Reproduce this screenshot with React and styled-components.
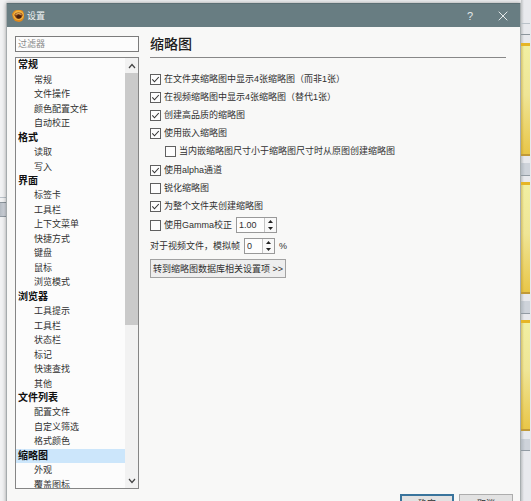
import React, { useState } from "react";
import styled, { createGlobalStyle } from "styled-components";

const GlobalStyle = createGlobalStyle`
  * { box-sizing: border-box; }
  body {
    margin: 0;
    overflow: hidden;
    background: #eff0f2;
    color: #303030;
    font: 9px/14px "Liberation Sans", "Noto Sans CJK SC", sans-serif;
  }
  button, input { font: inherit; color: inherit; margin: 0; }
`;

const Desktop = styled.div`
  display: grid;
  grid-template-columns: 6px 1fr 10px;
  height: 100vh;
  overflow: hidden;
`;

const Strip = styled.div`
  display: flex;
  flex-direction: column;
  background: ${(p) => (p.$right ? "linear-gradient(90deg, #bfc2c4, #e8e9ed 3px)" : "#f1f2f3")};
  padding-right: ${(p) => (p.$right ? "1px" : "0")};
`;

const Gap = styled.div`
  height: ${(p) => p.$h}px;
  flex: none;
`;

const Caption = styled.div`
  flex: none;
  height: ${(p) => p.$h}px;
  background: linear-gradient(90deg, #b3bac1, #ced3da 4px);
  border-bottom: 1px solid #929ba3;
`;

const Edge = styled.div`
  flex: none;
  height: ${(p) => p.$h}px;
  border-top: 1px solid #bac2c9;
  border-bottom: 1px solid #8c959c;
`;

const Folder = styled.div`
  flex: none;
  height: ${(p) => p.$h}px;
  border-top: 3px solid #e6b526;
  border-bottom: 2px solid #c19a39;
  background: linear-gradient(90deg, rgba(160, 120, 20, 0.35), transparent 3px),
    linear-gradient(#f1efa2, #efe596 45%, #e9c648);
`;

const Dialog = styled.main`
  display: flex;
  flex-direction: column;
  margin-top: 3px;
  min-height: 520px;
  background: #f8f8f7;
  border-left: 1px solid #a5abad;
  border-right: 1px solid #a7adaf;
  box-shadow: 0 0 4px rgba(0, 0, 0, 0.35);
`;

const TitleBar = styled.header`
  display: flex;
  align-items: center;
  height: 24px;
  flex: none;
  padding: 0 11px 0 5px;
  gap: 2px;
  background: #687d82;
  color: #f2f5f5;
  border-top: 1px solid #5c6f74;
`;

const TitleText = styled.h1`
  flex: 1;
  margin: 0;
  font-size: 9px;
  font-weight: 400;
`;

const TitleButton = styled.button`
  display: flex;
  align-items: center;
  justify-content: center;
  width: 12px;
  height: 20px;
  margin-left: 19px;
  padding: 0;
  border: 0;
  background: none;
  color: #e4e9ea;
  font-size: 11px;
`;

const Content = styled.div`
  display: grid;
  grid-template-columns: 124px 1fr;
  column-gap: 11px;
  padding: 9px 14px 0 8px;
`;

const Sidebar = styled.aside`
  display: flex;
  flex-direction: column;
  gap: 5px;
`;

const FilterInput = styled.input`
  width: 100%;
  height: 16px;
  padding: 0 2px;
  border: 1px solid #7c7c7c;
  background: #fcfcfc;
  outline: none;
  &::placeholder { color: #8b8b8b; opacity: 1; }
`;

const TreeFrame = styled.div`
  display: flex;
  height: 432px;
  border: 1px solid #858585;
  background: #fcfcfc;
  overflow: hidden;
`;

const Tree = styled.ul`
  display: flex;
  flex-direction: column;
  flex: 1;
  height: 434px;
  margin: 0;
  padding: 0;
  list-style: none;
`;

const TreeItem = styled.li`
  display: flex;
  align-items: center;
  flex: 1 1 0;
  min-height: 0;
  padding-left: ${(p) => (p.$group ? 2 : 18)}px;
  font-size: ${(p) => (p.$group ? 10 : 9)}px;
  font-weight: ${(p) => (p.$group ? 700 : 400)};
  color: ${(p) => (p.$group ? "#101010" : "#303030")};
  background: ${(p) => (p.$selected ? "#cce6fb" : "transparent")};
`;

const Scrollbar = styled.div`
  display: flex;
  flex-direction: column;
  width: 13px;
  background: #f2f2f2;
`;

const ScrollButton = styled.button`
  display: flex;
  align-items: center;
  justify-content: center;
  flex: none;
  height: 15px;
  padding: 0;
  border: 0;
  background: #f2f2f2;
`;

const Track = styled.div`
  flex: 1;
`;

const Thumb = styled.div`
  height: 63%;
  background: #cacaca;
`;

const Panel = styled.section`
  display: flex;
  flex-direction: column;
  align-items: stretch;
`;

const PanelTitle = styled.h2`
  margin: 0 0 12px;
  padding-bottom: 4px;
  border-bottom: 1px solid #888;
  font-size: 14px;
  line-height: 17px;
  font-weight: 500;
  color: #202020;
`;

const OptionRow = styled.div`
  display: flex;
  align-items: center;
  gap: 4px;
  height: ${(p) => (p.$field ? 20 : 18)}px;
  padding-left: ${(p) => (p.$nested ? 15 : 0)}px;
  margin-bottom: ${(p) => (p.$nested || p.$field ? 1 : 0)}px;
`;

const OptionLabel = styled.label`
  display: flex;
  align-items: center;
  gap: 3px;
  white-space: nowrap;
`;

const BoxWrap = styled.span`
  display: grid;
  width: 11px;
  height: 11px;
  > * { grid-area: 1 / 1; }
  svg { pointer-events: none; }
`;

const Box = styled.input`
  appearance: none;
  width: 11px;
  height: 11px;
  border: 1px solid #606060;
  background: #fdfdfd;
`;

const SpinFrame = styled.span`
  display: flex;
  width: ${(p) => (p.$wide ? 41 : 31)}px;
  height: 16px;
  border: 1px solid #999;
  background: #fdfdfd;
`;

const SpinInput = styled.input`
  flex: 1;
  min-width: 0;
  padding: 0 2px;
  border: 0;
  background: none;
  outline: none;
`;

const SpinButtons = styled.span`
  display: flex;
  flex-direction: column;
  width: 12px;
  border-left: 1px solid #c4c4c4;
`;

const SpinButton = styled.button`
  display: flex;
  align-items: center;
  justify-content: center;
  flex: 1;
  padding: 0;
  border: 0;
  background: #f8f8f8;
`;

const LinkButton = styled.button`
  align-self: flex-start;
  height: 19px;
  margin-top: 2px;
  padding: 0 2px;
  border: 1px solid #a2a2a2;
  background: #eeeeee;
  white-space: pre;
`;

const Footer = styled.footer`
  display: flex;
  justify-content: flex-end;
  gap: 5px;
  padding: 5px 7px 7px;
`;

const DialogButton = styled.button`
  width: 54px;
  height: 20px;
  padding: 0;
  border: ${(p) => (p.$primary ? "2px solid #39749c" : "1px solid #adadad")};
  background: #e2e2e2;
  line-height: 14px;
`;

const AppIcon = () => (
  <svg width="13" height="13" viewBox="0 0 13 13" aria-hidden="true">
    <path d="M2 2 4 1 6 1 9 1 11 2 12 5 12 9 10 12 7 13 3 12 1 9 0 5Z" fill="#e08a1c" />
    <ellipse cx="6.5" cy="6.3" rx="5.2" ry="4.8" fill="#f2b541" />
    <path d="M2.2 6Q3.5 3.4 6.5 3.6 9.6 3.4 10.8 6L9.6 8.6Q7 11 4 9Z" fill="#8a4316" />
    <path d="M3.6 5.4Q6.5 3.6 9.4 5.4" stroke="#f7d27c" strokeWidth=".9" fill="none" />
    <ellipse cx="6.9" cy="7.8" rx="2.5" ry="1.7" fill="#43200f" />
  </svg>
);

const CloseIcon = () => (
  <svg width="10" height="10" viewBox="0 0 10 10" aria-hidden="true">
    <path d="M.7.7 9.3 9.3M9.3.7.7 9.3" stroke="currentColor" />
  </svg>
);

const Chevron = ({ down }) => (
  <svg width="8" height="6" viewBox="0 0 8 6" aria-hidden="true">
    <path d={down ? "M1 1 4 4.5 7 1" : "M1 5 4 1.5 7 5"} stroke="#444" strokeWidth="1.2" fill="none" />
  </svg>
);

const Arrow = ({ down }) => (
  <svg width="5" height="3" viewBox="0 0 5 3" aria-hidden="true">
    <path d={down ? "M0 0H5L2.5 3Z" : "M0 3H5L2.5 0Z"} fill="#222" />
  </svg>
);

const sections = [
  ["常规", ["常规", "文件操作", "颜色配置文件", "自动校正"]],
  ["格式", ["读取", "写入"]],
  ["界面", ["标签卡", "工具栏", "上下文菜单", "快捷方式", "键盘", "鼠标", "浏览模式"]],
  ["浏览器", ["工具提示", "工具栏", "状态栏", "标记", "快速查找", "其他"]],
  ["文件列表", ["配置文件", "自定义筛选", "格式颜色"]],
  ["缩略图", ["外观", "覆盖图标"]],
];

const options = [
  { text: "在文件夹缩略图中显示4张缩略图（而非1张）", on: true },
  { text: "在视频缩略图中显示4张缩略图（替代1张）", on: true },
  { text: "创建高品质的缩略图", on: true },
  { text: "使用嵌入缩略图", on: true },
  { text: "当内嵌缩略图尺寸小于缩略图尺寸时从原图创建缩略图", on: false, nested: true },
  { text: "使用alpha通道", on: true },
  { text: "锐化缩略图", on: false },
  { text: "为整个文件夹创建缩略图", on: true },
];

function Checkbox({ text, initial }) {
  const [checked, setChecked] = useState(initial);
  return (
    <OptionLabel>
      <BoxWrap>
        <Box type="checkbox" checked={checked} onChange={(e) => setChecked(e.target.checked)} />
        {checked && (
          <svg width="11" height="11" viewBox="0 0 11 11" aria-hidden="true">
            <path d="M2.3 5.4 4.5 7.8 8.8 3" stroke="#333" strokeWidth="1.1" fill="none" />
          </svg>
        )}
      </BoxWrap>
      {text}
    </OptionLabel>
  );
}

function Spinner({ id, label, initial, step, digits, wide }) {
  const [value, setValue] = useState(initial);
  const change = (d) => setValue((v) => Math.max(0, Number(v) + d).toFixed(digits));
  return (
    <SpinFrame $wide={wide}>
      <SpinInput id={id} aria-label={label} value={value} onChange={(e) => setValue(e.target.value)} />
      <SpinButtons>
        <SpinButton type="button" aria-label="增加" onClick={() => change(step)}><Arrow /></SpinButton>
        <SpinButton type="button" aria-label="减少" onClick={() => change(-step)}><Arrow down /></SpinButton>
      </SpinButtons>
    </SpinFrame>
  );
}

export default function App() {
  return (
    <>
      <GlobalStyle />
      <Desktop>
        <Strip>
          <Gap $h={197} />
          <Edge $h={6} />
          <Caption $h={14} />
        </Strip>
        <Dialog>
          <TitleBar>
            <AppIcon />
            <TitleText>设置</TitleText>
            <TitleButton aria-label="帮助">?</TitleButton>
            <TitleButton aria-label="关闭"><CloseIcon /></TitleButton>
          </TitleBar>
          <Content>
            <Sidebar>
              <FilterInput placeholder="过滤器" aria-label="过滤器" />
              <TreeFrame>
                <Tree>
                  {sections.flatMap(([name, items]) => [
                    <TreeItem key={name + "-group"} $group $selected={name === "缩略图"}>{name}</TreeItem>,
                    ...items.map((item) => <TreeItem key={name + item}>{item}</TreeItem>),
                  ])}
                </Tree>
                <Scrollbar>
                  <ScrollButton aria-label="向上滚动"><Chevron /></ScrollButton>
                  <Track><Thumb /></Track>
                  <ScrollButton aria-label="向下滚动"><Chevron down /></ScrollButton>
                </Scrollbar>
              </TreeFrame>
            </Sidebar>
            <Panel>
              <PanelTitle>缩略图</PanelTitle>
              {options.map((o) => (
                <OptionRow key={o.text} $nested={o.nested}>
                  <Checkbox text={o.text} initial={o.on} />
                </OptionRow>
              ))}
              <OptionRow $field>
                <Checkbox text="使用Gamma校正" initial={false} />
                <Spinner label="Gamma" initial="1.00" step={0.1} digits={2} wide />
              </OptionRow>
              <OptionRow $field>
                <OptionLabel htmlFor="frame">对于视频文件，模拟帧</OptionLabel>
                <Spinner id="frame" initial="0" step={1} digits={0} />
                <span>%</span>
              </OptionRow>
              <LinkButton type="button">转到缩略图数据库相关设置项 &gt;&gt;</LinkButton>
            </Panel>
          </Content>
          <Footer>
            <DialogButton $primary>确定</DialogButton>
            <DialogButton>取消</DialogButton>
          </Footer>
        </Dialog>
        <Strip $right>
          <Gap $h={23} />
          <Edge $h={12} />
          <Gap $h={8} />
          <Folder $h={113} />
          <Gap $h={7} />
          <Caption $h={13} />
          <Gap $h={6} />
          <Folder $h={112} />
          <Gap $h={7} />
          <Caption $h={13} />
          <Gap $h={6} />
          <Folder $h={111} />
          <Gap $h={8} />
          <Caption $h={12} />
        </Strip>
      </Desktop>
    </>
  );
}
